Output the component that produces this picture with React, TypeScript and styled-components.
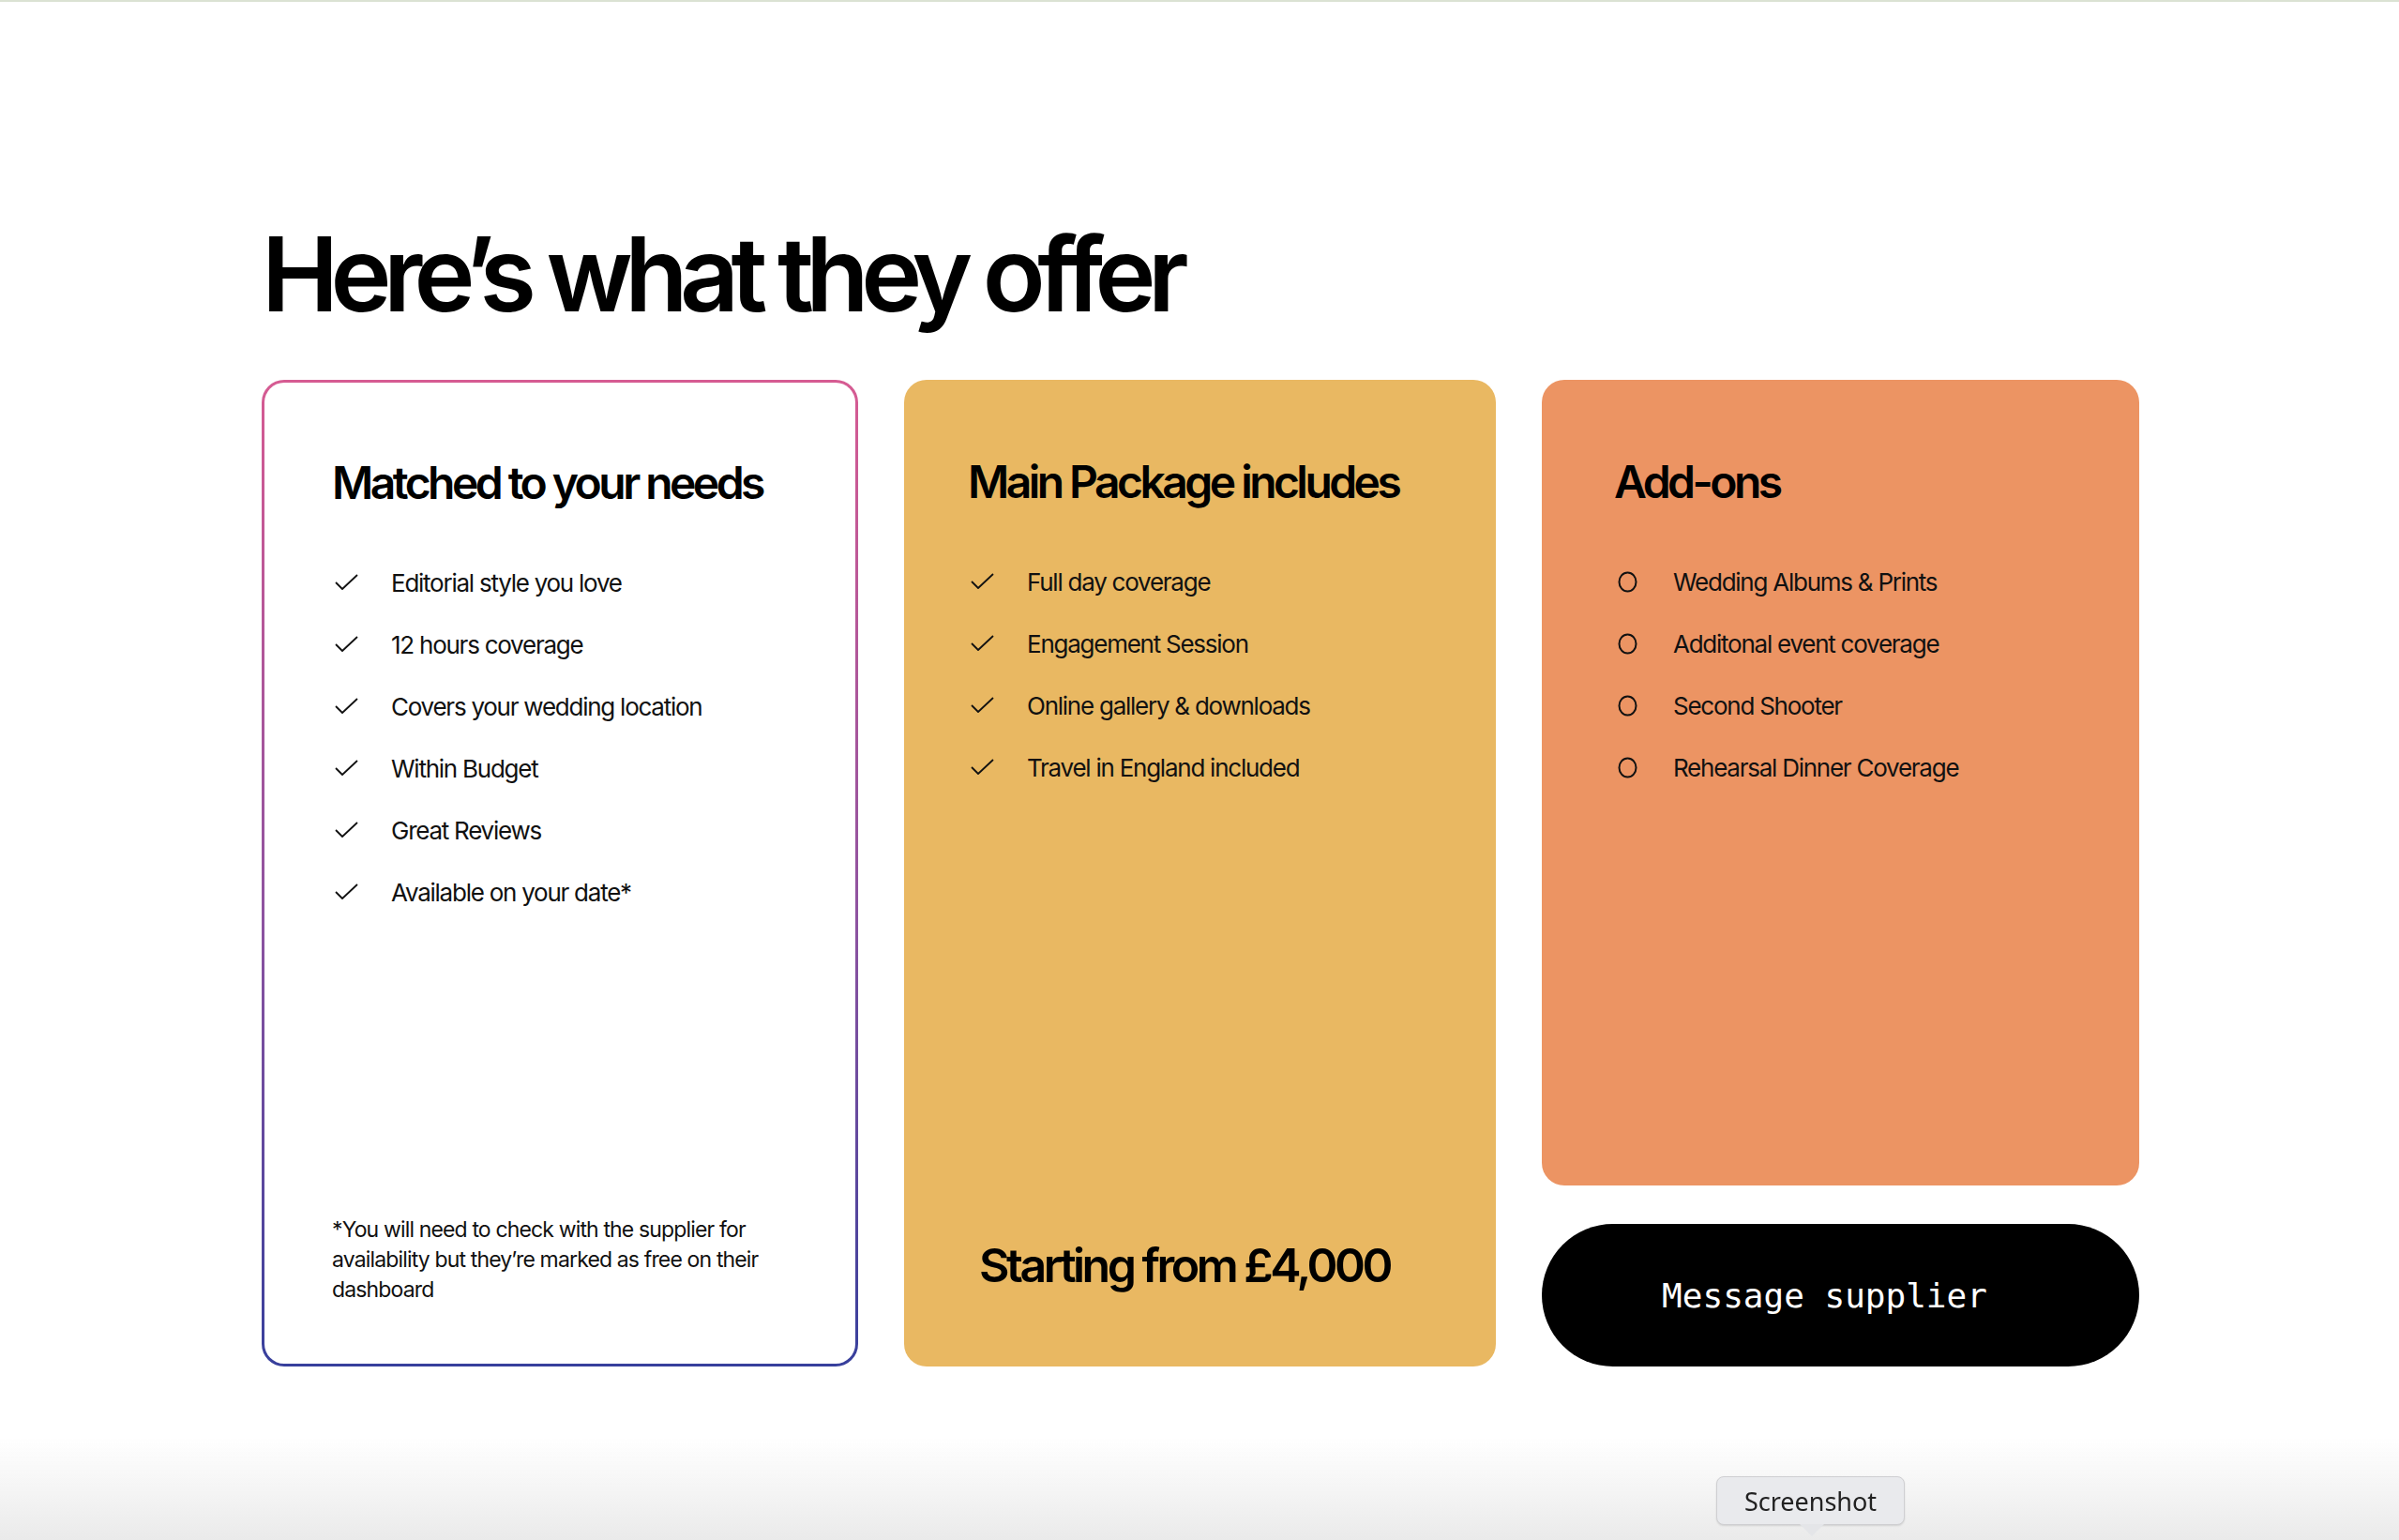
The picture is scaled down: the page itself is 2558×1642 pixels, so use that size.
import React from "react";
import styled, { createGlobalStyle, css } from "styled-components";

const GlobalStyle = createGlobalStyle`
    html, body {
        margin: 0;
        padding: 0;
        background: #ffffff;
    }
    body {
        font-family: Inter, "Noto Sans", "Liberation Sans", sans-serif;
        color: #0c0c0c;
        -webkit-font-smoothing: antialiased;
    }
`;

const Page = styled.main`
    min-height: 100vh;
    box-sizing: border-box;
    border-top: 2px solid #dbe2d3;
    padding: 230px 0 0 279px;
`;

const Title = styled.h1`
    margin: 0 0 52px;
    font-size: 110px;
    line-height: 121px;
    font-weight: 600;
    letter-spacing: -0.078em;
    color: #000;
`;

const Grid = styled.div`
    display: grid;
    grid-template-columns: 636px 631px 637px;
    column-gap: 49px;
    height: 1052px;
`;

type Tone = "outline" | "mustard" | "coral";

const Card = styled.section<{ $tone: Tone }>`
    box-sizing: border-box;
    display: flex;
    flex-direction: column;
    border-radius: 24px;
    padding: 80px 40px 0 75px;
    ${({ $tone }) =>
        $tone === "outline"
            ? css`
                  border: 3px solid transparent;
                  padding-top: 78px;
                  padding-left: 72px;
                  background: linear-gradient(#fff, #fff) padding-box,
                      linear-gradient(180deg, #d65b92 0%, #8d53a0 55%, #373f9c 100%) border-box;
              `
            : $tone === "mustard"
            ? css`
                  background: #e9b862;
                  padding-left: 68px;
              `
            : css`
                  background: #ec9463;
                  padding-left: 77px;
                  flex: 1;
              `}
`;

const Column = styled.div`
    display: flex;
    flex-direction: column;
    gap: 41px;
`;

const CardTitle = styled.h2`
    margin: 0 0 44px;
    font-size: 48px;
    line-height: 58px;
    font-weight: 600;
    letter-spacing: -0.074em;
    color: #000;
`;

const List = styled.ul`
    list-style: none;
    margin: 0;
    padding: 0;
`;

const Item = styled.li`
    display: flex;
    align-items: center;
    height: 66px;
    font-size: 26px;
    font-weight: 400;
    letter-spacing: -0.048em;
    color: #111;
`;

const IconSlot = styled.span<{ $shift?: number }>`
    flex: none;
    width: 63px;
    display: flex;
    align-items: center;
    padding-left: ${({ $shift }) => $shift ?? 3}px;
    box-sizing: border-box;
`;

const Footnote = styled.p`
    margin: auto 0 63px;
    max-width: 480px;
    font-size: 23px;
    line-height: 32px;
    font-weight: 400;
    letter-spacing: -0.037em;
    color: #111;
`;

const Price = styled.p`
    margin: auto 0 78px 12px;
    font-size: 50px;
    line-height: 60px;
    font-weight: 600;
    letter-spacing: -0.07em;
    color: #000;
`;

const MessageButton = styled.button`
    flex: none;
    height: 152px;
    border: none;
    border-radius: 76px;
    background: #000;
    color: #fff;
    padding: 0 34px 0 0;
    font-family: "DejaVu Sans Mono", "Liberation Mono", monospace;
    font-size: 36px;
    cursor: pointer;
`;

const Dock = styled.div`
    position: fixed;
    left: 0;
    right: 0;
    bottom: 0;
    height: 110px;
    background: linear-gradient(180deg, rgba(255, 255, 255, 0) 0%, #f4f4f4 55%, #eaeaea 100%);
    pointer-events: none;
`;

const Tooltip = styled.div`
    position: absolute;
    left: 1830px;
    top: 42px;
    width: 201px;
    height: 52px;
    box-sizing: border-box;
    border: 1px solid #cfcfd2;
    border-radius: 8px;
    background: #e9eaed;
    box-shadow: 0 1px 2px rgba(0, 0, 0, 0.12);
    display: flex;
    align-items: center;
    justify-content: center;
    font-family: "Noto Sans", Inter, sans-serif;
    font-size: 27px;
    color: #222;

    &::after {
        content: "";
        position: absolute;
        left: 88px;
        bottom: -13px;
        width: 0;
        height: 0;
        border-left: 13px solid transparent;
        border-right: 13px solid transparent;
        border-top: 13px solid #e4e5e8;
    }
`;

const Check = () => (
    <svg width="25" height="18" viewBox="0 0 25 18" fill="none">
        <polyline points="1,9 8,16 24,1" stroke="#111" strokeWidth="1.8" strokeLinejoin="round" />
    </svg>
);

const Ring = () => (
    <svg width="21" height="23" viewBox="0 0 21 23" fill="none">
        <ellipse cx="10.5" cy="11.5" rx="9" ry="10" stroke="#111" strokeWidth="2" />
    </svg>
);

const matched = [
    "Editorial style you love",
    "12 hours coverage",
    "Covers your wedding location",
    "Within Budget",
    "Great Reviews",
    "Available on your date*",
];

const included = ["Full day coverage", "Engagement Session", "Online gallery & downloads", "Travel in England included"];

const addOns = ["Wedding Albums & Prints", "Additonal event coverage", "Second Shooter", "Rehearsal Dinner Coverage"];

const App: React.FC = () => {
    return (
        <>
            <GlobalStyle />
            <Page>
                <Title>Here’s what they offer</Title>
                <Grid>
                    <Card $tone="outline">
                        <CardTitle>Matched to your needs</CardTitle>
                        <List>
                            {matched.map((text) => (
                                <Item key={text}>
                                    <IconSlot>
                                        <Check />
                                    </IconSlot>
                                    {text}
                                </Item>
                            ))}
                        </List>
                        <Footnote>
                            *You will need to check with the supplier for availability but they’re marked as free on
                            their dashboard
                        </Footnote>
                    </Card>

                    <Card $tone="mustard">
                        <CardTitle>Main Package includes</CardTitle>
                        <List>
                            {included.map((text) => (
                                <Item key={text}>
                                    <IconSlot>
                                        <Check />
                                    </IconSlot>
                                    {text}
                                </Item>
                            ))}
                        </List>
                        <Price>Starting from £4,000</Price>
                    </Card>

                    <Column>
                        <Card $tone="coral">
                            <CardTitle>Add-ons</CardTitle>
                            <List>
                                {addOns.map((text) => (
                                    <Item key={text}>
                                        <IconSlot $shift={4}>
                                            <Ring />
                                        </IconSlot>
                                        {text}
                                    </Item>
                                ))}
                            </List>
                        </Card>
                        <MessageButton>Message supplier</MessageButton>
                    </Column>
                </Grid>
            </Page>
            <Dock>
                <Tooltip>Screenshot</Tooltip>
            </Dock>
        </>
    );
};

export default App;
